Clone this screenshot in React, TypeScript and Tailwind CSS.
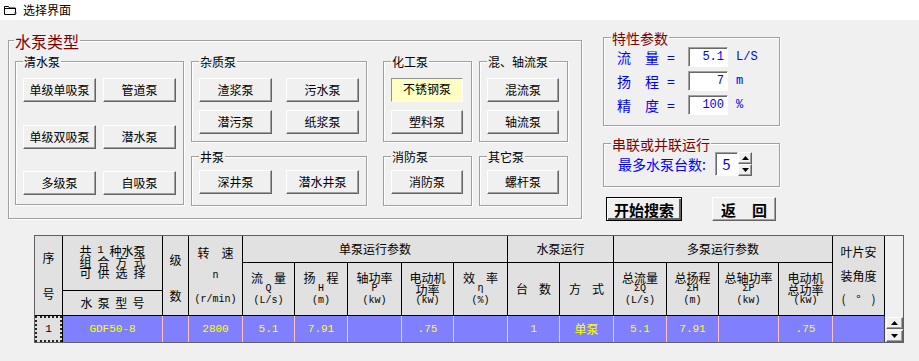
const raised =
  'border border-t-white border-l-white border-r-[#646464] border-b-[#646464] shadow-[inset_-1px_-1px_0_#a0a0a0] bg-[#f0f0f0]';
const sunken =
  'border border-t-[#a0a0a0] border-l-[#a0a0a0] border-r-white border-b-white shadow-[inset_1px_1px_0_#696969] bg-white';
const mono = "[font-family:'Liberation_Mono',monospace]";

function Btn({ label, className = 'w-[73px]' }: { label: string; className?: string }) {
  return (
    <div className={`flex h-[24px] items-center justify-center text-[12px] leading-none text-black ${raised} ${className}`}>
      {label}
    </div>
  );
}

function Box({
  title,
  className,
  children,
}: {
  title: string;
  className: string;
  children?: React.ReactNode;
}) {
  return (
    <div className={`border border-[#a0a0a0] shadow-[1px_1px_0_#fff,inset_1px_1px_0_#fff] ${className}`}>
      <div className="-mt-[7px] ml-[7px] h-[14px] w-fit bg-[#f0f0f0] px-[1px] text-[12px] leading-[14px] text-black">
        {title}
      </div>
      {children}
    </div>
  );
}

function Tri({ up }: { up?: boolean }) {
  return (
    <svg width="7" height="4" viewBox="0 0 7 4">
      <path d={up ? 'M0 4h7L3.5 0z' : 'M0 0h7L3.5 4z'} fill="#000" />
    </svg>
  );
}

function ParamRow({ a, b, value, unit }: { a: string; b: string; value: string; unit: string }) {
  return (
    <div className="flex h-[20px] items-center text-[14px] text-[#0000ff]">
      <span className="w-[28px]">{a}</span>
      <span className="w-[22px]">{b}</span>
      <span className="w-[21px]">=</span>
      <div className={`flex h-[20px] w-[40px] items-center justify-end pr-[3px] text-[12px] ${mono} ${sunken}`}>
        {value}
      </div>
      <span className={`ml-[8px] text-[12px] ${mono}`}>{unit}</span>
    </div>
  );
}

const hc =
  'flex flex-col items-center justify-center border-r border-b border-black bg-[#e1e1e1] text-[12px] text-black';
const sm = `${mono} text-[10px]`;

function Sub({ top, a, b, sym, unit }: { top?: string; a?: string; b?: string; sym: string; unit: string }) {
  return (
    <div className={`${hc} row-span-2`}>
      {top ? (
        <div className="leading-[11px]">{top}</div>
      ) : (
        <div className="flex w-[35px] justify-between leading-[11px]">
          <span>{a}</span>
          <span>{b}</span>
        </div>
      )}
      <div className={`${sm} leading-[12px]`}>{sym}</div>
      <div className={`${sm} leading-[11px]`}>{unit}</div>
    </div>
  );
}

function Sub2({ l1, l2, unit }: { l1: string; l2: string; unit: string }) {
  return (
    <div className={`${hc} row-span-2`}>
      <div className="leading-[12px]">{l1}</div>
      <div className="leading-[11px]">{l2}</div>
      <div className={`${sm} leading-[11px]`}>{unit}</div>
    </div>
  );
}

const dc = `flex items-center justify-center border-r border-[#ffc0c0] bg-[#8080ff] text-[11px] text-[#ffff00] ${mono}`;

function Table() {
  const data = ['5.1', '7.91', '', '.75', '', '1'];
  return (
    <div className="mt-[14px] ml-[34px] grid w-[870px] grid-cols-[28px_100px_26px_54px_52px_53px_54px_52px_54px_52px_54px_53px_52px_60px_54px_52px_18px] grid-rows-[27px_28px_25px_26px] border border-[#606060]">
      <div className={`${hc} row-span-3 gap-[22px]`}>
        <span className="leading-[14px]">序</span>
        <span className="leading-[14px]">号</span>
      </div>
      <div className={`${hc} row-span-2 pb-[2px]`}>
        <div className="flex w-[66px] justify-between leading-[11px]">
          <span>共</span>
          <span className={`${mono} text-[11px]`}>1</span>
          <span>种水泵</span>
        </div>
        <div className="flex w-[66px] justify-between leading-[11px]">
          <span>组</span><span>合</span><span>方</span><span>式</span>
        </div>
        <div className="flex w-[66px] justify-between leading-[12px]">
          <span>可</span><span>供</span><span>选</span><span>择</span>
        </div>
      </div>
      <div className={`${hc} row-span-3 gap-[22px] pt-[4px]`}>
        <span className="leading-[14px]">级</span>
        <span className="leading-[14px]">数</span>
      </div>
      <div className={`${hc} row-span-3`}>
        <div className="flex w-[36px] justify-between leading-[23px]">
          <span>转</span>
          <span>速</span>
        </div>
        <div className={`${sm} leading-[24px]`}>n</div>
        <div className={`${sm} leading-[23px]`}>(r/min)</div>
      </div>
      <div className={`${hc} col-span-5`}>单泵运行参数</div>
      <div className={`${hc} col-span-2`}>水泵运行</div>
      <div className={`${hc} col-span-4`}>多泵运行参数</div>
      <div className={`${hc} row-span-3`}>
        <div className="leading-[24px]">叶片安</div>
        <div className="leading-[23px]">装角度</div>
        <div className="flex w-[34px] justify-between leading-[24px]">
          <span>(</span>
          <span>°</span>
          <span>)</span>
        </div>
      </div>
      <div className="row-span-4 flex flex-col items-start justify-end gap-[1px] bg-[#f0f0f0] pl-[1px]">
        <div className={`flex h-[12px] w-[17px] items-center justify-center ${raised}`}>
          <Tri up />
        </div>
        <div className={`flex h-[12px] w-[17px] items-center justify-center ${raised}`}>
          <Tri />
        </div>
      </div>

      <Sub a="流" b="量" sym="Q" unit="(L/s)" />
      <Sub a="扬" b="程" sym="H" unit="(m)" />
      <Sub top="轴功率" sym="P" unit="(kw)" />
      <Sub2 l1="电动机" l2="功率" unit="(kw)" />
      <Sub a="效" b="率" sym="η" unit="(%)" />
      <div className={`${hc} row-span-2`}>
        <div className="flex w-[35px] justify-between">
          <span>台</span>
          <span>数</span>
        </div>
      </div>
      <div className={`${hc} row-span-2`}>
        <div className="flex w-[35px] justify-between">
          <span>方</span>
          <span>式</span>
        </div>
      </div>
      <Sub top="总流量" sym="ΣQ" unit="(L/s)" />
      <Sub top="总扬程" sym="ΣH" unit="(m)" />
      <Sub top="总轴功率" sym="ΣP" unit="(kw)" />
      <Sub2 l1="电动机" l2="总功率" unit="(kw)" />

      <div className={hc}>
        <div className="flex w-[64px] justify-between">
          <span>水</span><span>泵</span><span>型</span><span>号</span>
        </div>
      </div>

      <div className="border-r border-black bg-[#e1e1e1]">
        <div className={`flex h-full w-full items-center justify-center border-2 border-dotted border-[#222] text-[11px] text-black ${mono}`}>
          1
        </div>
      </div>
      <div className={dc}>GDF50-8</div>
      <div className={dc}></div>
      <div className={dc}>2800</div>
      {data.slice(0, 5).map((v, i) => (
        <div key={'a' + i} className={dc}>
          {v}
        </div>
      ))}
      <div className={dc}>1</div>
      <div className={`${dc} [font-family:'Noto_Sans_CJK_SC',sans-serif] text-[12px]`}>单泵</div>
      <div className={dc}>5.1</div>
      <div className={dc}>7.91</div>
      <div className={dc}></div>
      <div className={dc}>.75</div>
      <div className="border-r border-[#404040] bg-[#8080ff]"></div>
    </div>
  );
}

export default function App() {
  return (
    <div className="h-[361px] w-[919px] overflow-hidden bg-[#f0f0f0] [font-family:'Noto_Sans_CJK_SC',sans-serif]">
      {/* title bar */}
      <div className="flex h-[20px] items-center bg-white">
        <svg className="ml-[3px]" width="15" height="12" viewBox="0 0 15 12">
          <path d="M1.5 2.5h4l1 1.5h6v6.5h-11z" fill="#fff" stroke="#000" />
          <path d="M1.5 4.5h11" stroke="#000" />
          <path d="M11 8.5h3l-1.5 2z" fill="#1a3d8f" />
        </svg>
        <span className="ml-[5px] text-[12px] leading-none text-black">选择界面</span>
      </div>

      <div className="flex items-start">
        {/* 水泵类型 */}
        <div className="mt-[20px] ml-[8px] h-[179px] w-[574px] border border-[#a0a0a0] shadow-[1px_1px_0_#fff,inset_1px_1px_0_#fff]">
          <div className="-mt-[9px] ml-[5px] h-[18px] w-fit bg-[#f0f0f0] px-[1px] text-[16px] leading-[18px] text-[#800000]">
            水泵类型
          </div>
          <div className="mt-[11px] flex items-start pl-[6px]">
            <Box title="清水泵" className="h-[144px] w-[169px]">
              <div className="mt-[9px] flex flex-col pl-[7px]">
                <div className="flex gap-[7px]">
                  <Btn label="单级单吸泵" />
                  <Btn label="管道泵" />
                </div>
                <div className="mt-[23px] flex gap-[7px]">
                  <Btn label="单级双吸泵" />
                  <Btn label="潜水泵" />
                </div>
                <div className="mt-[22px] flex gap-[7px]">
                  <Btn label="多级泵" />
                  <Btn label="自吸泵" />
                </div>
              </div>
            </Box>

            <div className="ml-[7px] flex w-[176px] flex-col">
              <Box title="杂质泵" className="h-[81px]">
                <div className="mt-[9px] flex flex-col gap-[8px] pl-[7px]">
                  <div className="flex gap-[14px]">
                    <Btn label="渣浆泵" />
                    <Btn label="污水泵" />
                  </div>
                  <div className="flex gap-[14px]">
                    <Btn label="潜污泵" />
                    <Btn label="纸浆泵" />
                  </div>
                </div>
              </Box>
              <Box title="井泵" className="mt-[14px] h-[50px]">
                <div className="mt-[6px] flex gap-[14px] pl-[7px]">
                  <Btn label="深井泵" />
                  <Btn label="潜水井泵" />
                </div>
              </Box>
            </div>

            <div className="ml-[16px] flex w-[89px] flex-col">
              <Box title="化工泵" className="h-[81px]">
                <div className="mt-[9px] flex flex-col gap-[8px] pl-[7px]">
                  <div className="flex h-[24px] w-[72px] items-start justify-center border border-t-[#909090] border-l-[#909090] border-r-white border-b-white bg-[#ffffc4] pt-[2px] text-[12px] leading-[16px] text-black">
                    不锈钢泵
                  </div>
                  <Btn label="塑料泵" className="w-[72px]" />
                </div>
              </Box>
              <Box title="消防泵" className="mt-[14px] h-[50px]">
                <div className="mt-[6px] pl-[7px]">
                  <Btn label="消防泵" className="w-[72px]" />
                </div>
              </Box>
            </div>

            <div className="ml-[7px] flex w-[89px] flex-col">
              <Box title="混、轴流泵" className="h-[81px]">
                <div className="mt-[9px] flex flex-col gap-[8px] pl-[7px]">
                  <Btn label="混流泵" className="w-[72px]" />
                  <Btn label="轴流泵" className="w-[72px]" />
                </div>
              </Box>
              <Box title="其它泵" className="mt-[14px] h-[50px]">
                <div className="mt-[6px] pl-[7px]">
                  <Btn label="螺杆泵" className="w-[72px]" />
                </div>
              </Box>
            </div>
          </div>
        </div>

        {/* right column */}
        <div className="ml-[21px] flex w-[177px] flex-col">
          <div className="mt-[17px] h-[89px] border border-[#a0a0a0] shadow-[1px_1px_0_#fff,inset_1px_1px_0_#fff]">
            <div className="-mt-[8px] ml-[7px] h-[16px] w-fit bg-[#f0f0f0] px-[1px] text-[14px] leading-[16px] text-[#800000]">
              特性参数
            </div>
            <div className="mt-[1px] flex flex-col gap-[4px] pl-[13px]">
              <ParamRow a="流" b="量" value="5.1" unit="L/S" />
              <ParamRow a="扬" b="程" value="7" unit="m" />
              <ParamRow a="精" b="度" value="100" unit="%" />
            </div>
          </div>

          <div className="mt-[17px] h-[44px] border border-[#a0a0a0] shadow-[1px_1px_0_#fff,inset_1px_1px_0_#fff]">
            <div className="-mt-[8px] ml-[7px] h-[16px] w-fit bg-[#f0f0f0] px-[1px] text-[14px] leading-[16px] text-[#800000]">
              串联或并联运行
            </div>
            <div className="flex h-[24px] items-center pl-[14px]">
              <span className="w-[97px] text-[14px] text-[#0000ff]">最多水泵台数:</span>
              <div className={`flex h-[24px] w-[23px] items-center justify-center text-[15px] text-[#0000ff] ${sunken}`}>
                5
              </div>
              <div className="flex flex-col">
                <div className={`flex h-[12px] w-[14px] items-center justify-center ${raised}`}>
                  <Tri up />
                </div>
                <div className={`flex h-[12px] w-[14px] items-center justify-center ${raised}`}>
                  <Tri />
                </div>
              </div>
            </div>
          </div>

          <div className="mt-[10px] flex">
            <div className="ml-[3px] flex h-[24px] w-[76px] items-center justify-center border border-black bg-[#f0f0f0] text-[15px] leading-none font-bold text-black shadow-[inset_1px_1px_0_#fff,inset_-2px_-2px_0_#646464]">
              开始搜索
            </div>
            <div className={`ml-[30px] flex h-[24px] w-[64px] items-center justify-center text-[15px] leading-none font-bold text-black ${raised}`}>
              <div className="flex w-[46px] justify-between">
                <span>返</span>
                <span>回</span>
              </div>
            </div>
          </div>
        </div>
      </div>

      <Table />
    </div>
  );
}
